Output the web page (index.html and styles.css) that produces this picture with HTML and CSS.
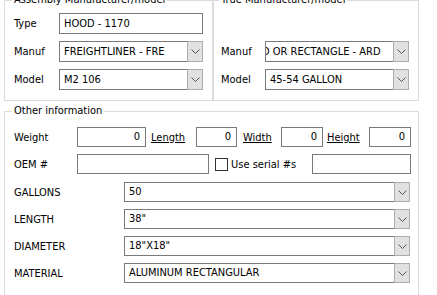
FILE: index.html
```html
<!DOCTYPE html>
<html>
<head>
<meta charset="utf-8">
<link rel="stylesheet" href="styles.css">
</head>
<body>
<div class="top">
  <div class="group group-left">
    <span class="group-title">Assembly Manufacturer/model</span>
    <div class="form">
      <label class="lbl">Type</label>
      <div class="field">HOOD - 1170</div>
      <label class="lbl">Manuf</label>
      <div class="combo"><div class="combo-text">FREIGHTLINER - FRE</div><div class="combo-btn"><svg width="9" height="5" viewBox="0 0 9 5"><polyline points="0.5,0.5 4.5,4.5 8.5,0.5" fill="none" stroke="#555" stroke-width="1"/></svg></div></div>
      <label class="lbl">Model</label>
      <div class="combo"><div class="combo-text">M2 106</div><div class="combo-btn"><svg width="9" height="5" viewBox="0 0 9 5"><polyline points="0.5,0.5 4.5,4.5 8.5,0.5" fill="none" stroke="#555" stroke-width="1"/></svg></div></div>
    </div>
  </div>
  <div class="group group-right">
    <span class="group-title">True Manufacturer/model</span>
    <div class="form form-right">
      <span class="spacer"></span>
      <span class="spacer"></span>
      <label class="lbl">Manuf</label>
      <div class="combo"><div class="combo-text scrolled-box"><span class="scrolled">D OR RECTANGLE - ARD</span></div><div class="combo-btn"><svg width="9" height="5" viewBox="0 0 9 5"><polyline points="0.5,0.5 4.5,4.5 8.5,0.5" fill="none" stroke="#555" stroke-width="1"/></svg></div></div>
      <label class="lbl">Model</label>
      <div class="combo"><div class="combo-text">45-54 GALLON</div><div class="combo-btn"><svg width="9" height="5" viewBox="0 0 9 5"><polyline points="0.5,0.5 4.5,4.5 8.5,0.5" fill="none" stroke="#555" stroke-width="1"/></svg></div></div>
    </div>
  </div>
</div>

<div class="group group-other">
  <span class="group-title">Other information</span>
  <div class="dims">
    <label class="lbl w-weight">Weight</label>
    <div class="field num w69">0</div>
    <span class="link ml5 w45">Length</span>
    <div class="field num w41">0</div>
    <span class="link ml6 w38">Width</span>
    <div class="field num w42">0</div>
    <span class="link ml4 w42">Height</span>
    <div class="field num w42">0</div>
  </div>
  <div class="oem">
    <label class="lbl w-weight">OEM #</label>
    <div class="field w132"></div>
    <span class="check"></span>
    <span class="check-lbl">Use serial #s</span>
    <div class="field w99"></div>
  </div>
  <div class="attrs">
    <label class="lbl">GALLONS</label>
    <div class="combo"><div class="combo-text">50</div><div class="combo-btn"><svg width="9" height="5" viewBox="0 0 9 5"><polyline points="0.5,0.5 4.5,4.5 8.5,0.5" fill="none" stroke="#555" stroke-width="1"/></svg></div></div>
    <label class="lbl">LENGTH</label>
    <div class="combo"><div class="combo-text">38"</div><div class="combo-btn"><svg width="9" height="5" viewBox="0 0 9 5"><polyline points="0.5,0.5 4.5,4.5 8.5,0.5" fill="none" stroke="#555" stroke-width="1"/></svg></div></div>
    <label class="lbl">DIAMETER</label>
    <div class="combo"><div class="combo-text">18"X18"</div><div class="combo-btn"><svg width="9" height="5" viewBox="0 0 9 5"><polyline points="0.5,0.5 4.5,4.5 8.5,0.5" fill="none" stroke="#555" stroke-width="1"/></svg></div></div>
    <label class="lbl">MATERIAL</label>
    <div class="combo"><div class="combo-text">ALUMINUM RECTANGULAR</div><div class="combo-btn"><svg width="9" height="5" viewBox="0 0 9 5"><polyline points="0.5,0.5 4.5,4.5 8.5,0.5" fill="none" stroke="#555" stroke-width="1"/></svg></div></div>
  </div>
</div>
</body>
</html>
```
FILE: styles.css
```css
html, body {
  margin: 0;
  padding: 0;
  background: #ffffff;
}
body {
  font-family: "DejaVu Sans Condensed", "DejaVu Sans", sans-serif;
  font-stretch: condensed;
  font-size: 11px;
  color: #000;
  height: 295px;
  overflow: hidden;
}
.top {
  display: flex;
  margin-left: 4px;
}
.group {
  position: relative;
  border: 1px solid #dcdcdc;
  box-sizing: border-box;
}
.group-title {
  position: absolute;
  top: -8px;
  left: 7px;
  padding: 0 2px;
  background: #fff;
  line-height: 13px;
  white-space: nowrap;
}
.group-left {
  width: 209px;
  height: 101px;
  padding: 12px 9px 0 9px;
}
.group-right {
  width: 206px;
  height: 101px;
  padding: 12px 9px 0 7px;
}
.group-right .group-title { left: 5px; }
.form {
  display: grid;
  grid-template-columns: 45px 144px;
  grid-auto-rows: 21px;
  row-gap: 7px;
  align-items: center;
}
.form-right {
  grid-template-columns: 44px 144px;
}
.lbl {
  white-space: nowrap;
  line-height: 13px;
}
.field {
  box-sizing: border-box;
  height: 21px;
  border: 1px solid #7a7a7a;
  background: #fff;
  padding: 0 4px;
  line-height: 19px;
  white-space: nowrap;
  overflow: hidden;
}
.num { text-align: right; padding-right: 5px; }
.combo {
  display: flex;
  box-sizing: border-box;
  height: 21px;
}
.combo-text {
  flex: 1;
  min-width: 0;
  border: 1px solid #7a7a7a;
  border-right: none;
  background: #fff;
  padding-left: 4px;
  line-height: 19px;
  white-space: nowrap;
  overflow: hidden;
}
.scrolled-box { padding-left: 0; }
.scrolled {
  display: inline-block;
  margin-left: -4px;
}
.combo-btn {
  width: 16px;
  box-sizing: border-box;
  border: 1px solid #adadad;
  background: #e1e1e1;
  display: flex;
  align-items: center;
  justify-content: center;
}
.combo-btn svg { display: block; }
.group-other {
  width: 415px;
  height: 184px;
  border-bottom: none;
  margin: 10px 0 0 4px;
  padding: 15px 7px 0 9px;
}
.dims, .oem {
  display: flex;
  align-items: center;
  height: 20px;
}
.dims .field, .oem .field { height: 20px; line-height: 18px; }
.oem { margin-top: 7px; }
.w-weight { width: 63px; }
.w69 { width: 69px; }
.w41 { width: 41px; }
.w42 { width: 42px; }
.w45 { width: 45px; }
.w38 { width: 38px; }
.w132 { width: 132px; }
.w99 { width: 99px; }
.ml4 { margin-left: 4px; }
.ml5 { margin-left: 5px; }
.ml6 { margin-left: 6px; }
.link { text-decoration: underline; white-space: nowrap; }
.check {
  box-sizing: border-box;
  width: 13px;
  height: 13px;
  border: 1px solid #333;
  background: #fff;
  margin-left: 6px;
}
.check-lbl {
  margin-left: 3px;
  width: 81px;
  white-space: nowrap;
}
.attrs {
  margin-top: 8px;
  display: grid;
  grid-template-columns: 110px 286px;
  grid-auto-rows: 20px;
  row-gap: 7px;
  align-items: center;
}
.attrs .combo { height: 20px; }
.attrs .combo-text { line-height: 18px; }
```
